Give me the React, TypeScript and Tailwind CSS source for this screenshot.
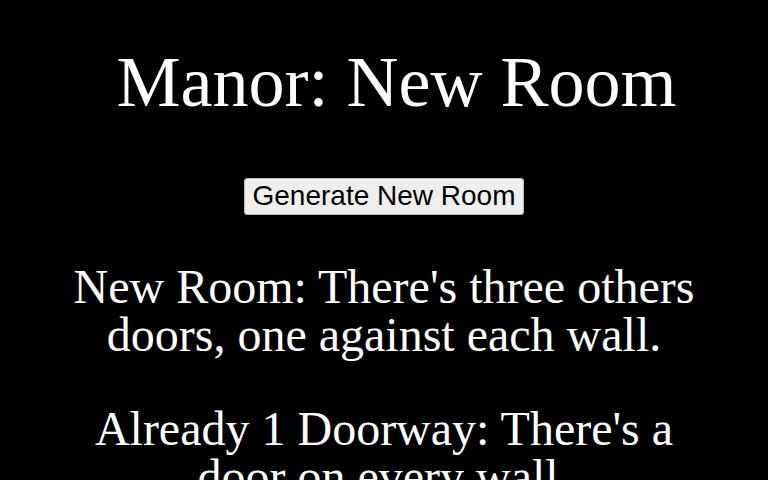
export default function App() {
    const rooms = [
        "New Room: There's three others doors, one against each wall.",
        "Already 1 Doorway: There's a door on every wall.",
    ]

    return (
        <div className="min-h-screen w-full bg-black text-white flex flex-col items-center font-['Liberation_Serif',serif]">
            <h1 className="mt-[46px] pl-[25px] text-[72px] leading-none font-normal">Manor: New Room</h1>
            <button className="mt-[60px] px-[7px] pb-[2px] h-[37px] bg-[#efefef] border border-[#b8b8b8] rounded-[3px] text-black text-[28px] leading-none font-['Liberation_Sans',Arial,sans-serif]">
                Generate New Room
            </button>
            <div className="w-full px-[50px] mt-[48px] flex flex-col gap-[46px] text-center">
                {rooms.map((room) => (
                    <p key={room} className="text-[48px] leading-none">{room}</p>
                ))}
            </div>
        </div>
    )
}
